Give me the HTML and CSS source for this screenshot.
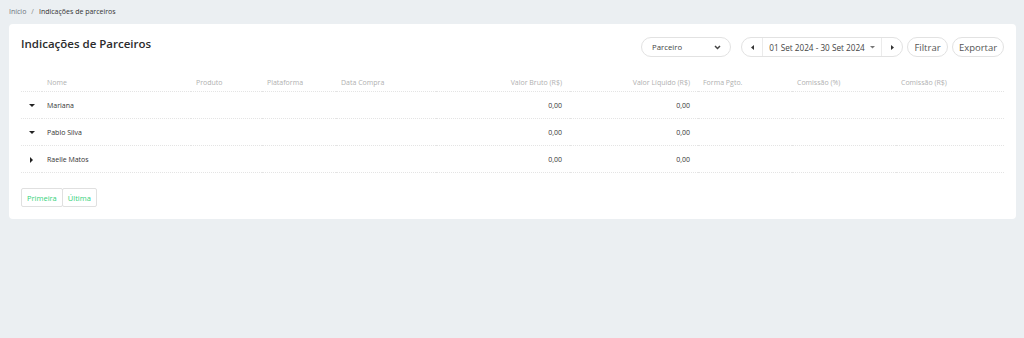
FILE: index.html
```html
<!DOCTYPE html>
<html>

<head>
  <title>Indicações de Parceiros</title>
  <link rel="stylesheet" href="styles.css">
</head>

<body>
  <div class="breadcrumb">
    <span class="crumb-link">Início</span>
    <span class="crumb-sep">/</span>
    <span class="crumb-current">Indicações de parceiros</span>
  </div>

  <div class="card">
    <div class="card-header">
      <h1>Indicações de Parceiros</h1>

      <div class="toolbar">
        <div class="select">
          <span>Parceiro</span>
          <svg width="7" height="5" viewBox="0 0 7 5"><path d="M1 1 L3.5 3.5 L6 1" fill="none" stroke="#444" stroke-width="1.5"/></svg>
        </div>

        <div class="date-range">
          <span class="date-nav"><svg width="3" height="5" viewBox="0 0 3 5"><path d="M3 0 L0 2.5 L3 5 Z" fill="#333"/></svg></span>
          <span class="date-text">01 Set 2024 - 30 Set 2024 <svg width="5" height="3" viewBox="0 0 5 3"><path d="M0 0 L5 0 L2.5 2.5 Z" fill="#777"/></svg></span>
          <span class="date-nav"><svg width="3" height="5" viewBox="0 0 3 5"><path d="M0 0 L3 2.5 L0 5 Z" fill="#333"/></svg></span>
        </div>

        <button class="pill filter">Filtrar</button>
        <button class="pill export">Exportar</button>
      </div>
    </div>

    <table class="report">
      <colgroup>
        <col style="width: 21px">
        <col style="width: 149px">
        <col style="width: 71px">
        <col style="width: 74px">
        <col style="width: 100px">
        <col style="width: 134px">
        <col style="width: 128px">
        <col style="width: 94px">
        <col style="width: 104px">
        <col style="width: 108px">
      </colgroup>
      <thead>
        <tr>
          <th></th>
          <th>Nome</th>
          <th>Produto</th>
          <th>Plataforma</th>
          <th>Data Compra</th>
          <th class="num">Valor Bruto (R$)</th>
          <th class="num">Valor Líquido (R$)</th>
          <th>Forma Pgto.</th>
          <th class="pct">Comissão (%)</th>
          <th class="pct">Comissão (R$)</th>
        </tr>
      </thead>
      <tbody>
        <tr>
          <td class="toggle"><span class="caret-down"></span></td>
          <td>Mariana</td>
          <td></td>
          <td></td>
          <td></td>
          <td class="num">0,00</td>
          <td class="num">0,00</td>
          <td></td>
          <td></td>
          <td></td>
        </tr>
        <tr>
          <td class="toggle"><span class="caret-down"></span></td>
          <td>Pablo Silva</td>
          <td></td>
          <td></td>
          <td></td>
          <td class="num">0,00</td>
          <td class="num">0,00</td>
          <td></td>
          <td></td>
          <td></td>
        </tr>
        <tr>
          <td class="toggle"><span class="caret-right"></span></td>
          <td>Raelle Matos</td>
          <td></td>
          <td></td>
          <td></td>
          <td class="num">0,00</td>
          <td class="num">0,00</td>
          <td></td>
          <td></td>
          <td></td>
        </tr>
      </tbody>
    </table>

    <div class="pagination">
      <button>Primeira</button>
      <button>Última</button>
    </div>
  </div>
</body>

</html>
```

FILE: styles.css
```css
body {
  margin: 0;
  padding: 0 8px 0 9px;
  font-family: "Open Sans", "Noto Sans", sans-serif;
  background-color: #ebeff2;
  color: #333;
}

.breadcrumb {
  height: 24px;
  display: flex;
  align-items: center;
  gap: 5px;
  font-size: 7px;
  padding-bottom: 2px;
  box-sizing: border-box;
}

.crumb-link {
  color: #6c757d;
}

.crumb-sep {
  color: #888;
}

.crumb-current {
  color: #333;
}

.card {
  background-color: #fff;
  border-radius: 4px;
  padding: 13px 12px 12px 12px;
}

.card-header {
  display: flex;
  justify-content: space-between;
  align-items: flex-start;
  height: 37px;
}

h1 {
  margin: 0;
  font-size: 11.5px;
  font-weight: 600;
  line-height: 14px;
  color: #2b2b2b;
}

.toolbar {
  display: flex;
  align-items: center;
  gap: 4px;
}

.select {
  width: 90px;
  height: 20px;
  box-sizing: border-box;
  border: 1px solid #e2e2e2;
  border-radius: 10px;
  display: flex;
  align-items: center;
  justify-content: space-between;
  padding: 0 9px 0 10px;
  font-size: 7.8px;
  color: #444;
  margin-right: 6px;
}

.date-range {
  width: 162px;
  height: 20px;
  box-sizing: border-box;
  border: 1px solid #e2e2e2;
  border-radius: 10px;
  display: flex;
  align-items: stretch;
  font-size: 8.2px;
  color: #444;
}

.date-nav {
  width: 20px;
  display: flex;
  align-items: center;
  justify-content: center;
}

.date-text {
  flex: 1;
  border-left: 1px solid #ebebeb;
  border-right: 1px solid #ebebeb;
  display: flex;
  align-items: center;
  justify-content: center;
  gap: 5px;
}

.pill {
  height: 20px;
  box-sizing: border-box;
  border: 1px solid #e2e2e2;
  border-radius: 10px;
  background-color: #fff;
  font-family: inherit;
  font-size: 9.5px;
  color: #555;
  padding: 0;
}

.filter {
  width: 41px;
}

.export {
  width: 52px;
}

.report {
  width: 983px;
  border-collapse: collapse;
  table-layout: fixed;
}

.report th {
  height: 17px;
  padding: 0 5px;
  font-size: 7px;
  font-weight: normal;
  color: #b0b0b0;
  text-align: left;
  border-bottom: 1px dotted #e4e4e4;
}

.report td {
  height: 26px;
  padding: 0 5px;
  font-size: 7px;
  color: #333;
  border-bottom: 1px dotted #e4e4e4;
}

.report .num {
  text-align: right;
  padding-right: 8px;
}

.report .pct {
  padding-left: 5px;
}

.report .toggle {
  padding: 0 0 0 8px;
}

.caret-down {
  display: inline-block;
  width: 0;
  height: 0;
  border-left: 3px solid transparent;
  border-right: 3px solid transparent;
  border-top: 3px solid #222;
  vertical-align: middle;
}

.caret-right {
  display: inline-block;
  width: 0;
  height: 0;
  margin-left: 1px;
  border-top: 3px solid transparent;
  border-bottom: 3px solid transparent;
  border-left: 3px solid #222;
  vertical-align: middle;
}

.pagination {
  display: flex;
  margin-top: 15px;
}

.pagination button {
  height: 19px;
  box-sizing: border-box;
  border: 1px solid #e0e0e0;
  background-color: #fff;
  font-family: inherit;
  font-size: 7.5px;
  color: #34d27a;
  padding: 0 5px;
  border-radius: 2px;
}

.pagination button + button {
  margin-left: -1px;
}
```
